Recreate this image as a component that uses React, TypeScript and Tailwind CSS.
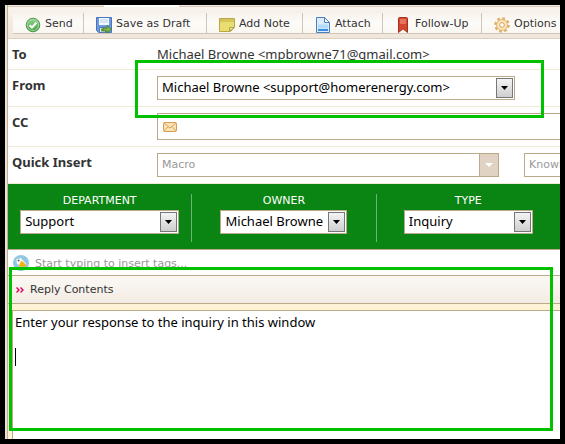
import type { ReactNode } from "react";

const SANS = "font-['Noto_Sans','Open_Sans',sans-serif]";
const WIDE = "font-['DejaVu_Sans',Verdana,sans-serif]";

function SendIcon() {
  return (
    <svg width="16" height="16" viewBox="0 0 16 16" aria-hidden="true">
      <defs>
        <linearGradient id="send" x1="0" y1="0" x2="0" y2="1">
          <stop offset="0" stopColor="#9bd39a" />
          <stop offset="1" stopColor="#3fa23c" />
        </linearGradient>
      </defs>
      <circle cx="8" cy="8" r="6.8" fill="url(#send)" stroke="#4c9a49" />
      <circle cx="8" cy="8" r="5.6" fill="none" stroke="#a9dca6" strokeWidth="0.8" />
      <path d="M4.6 8.2 7 10.5 11.4 5.8" fill="none" stroke="#fff" strokeWidth="2.2" />
    </svg>
  );
}

function SaveIcon() {
  return (
    <svg width="16" height="16" viewBox="0 0 16 16" aria-hidden="true">
      <path d="M0.5 0.5h15v15h-13l-2-2z" fill="#6b9ae0" stroke="#4a74bd" />
      <path d="M3 1h10v7H3z" fill="#f4f8fd" />
      <path d="M4 3h8M4 5h8" stroke="#b9cfe9" />
      <path d="M3.5 10.5h6v5h-6z" fill="#e3ecf8" stroke="#5479b5" />
      <path d="M5 11.5h2v3H5z" fill="#63a244" />
      <path d="M7 11h4V8.5l4.5 4-4.5 3.3V14H7z" fill="#7db44f" stroke="#47802a" strokeWidth="0.9" />
    </svg>
  );
}

function NoteIcon() {
  return (
    <svg width="16" height="16" viewBox="0 0 16 16" aria-hidden="true">
      <path d="M0.5 1.5h15v9l-4 4h-11z" fill="#e9dd72" stroke="#b9a647" />
      <path d="M1 2h14v3H1z" fill="#d3c559" />
      <path d="M15 10.5h-4.5V14z" fill="#8c7b2b" />
      <path d="M11 10.5h4L11 14z" fill="#faf3b4" stroke="#a8963e" strokeWidth="0.7" />
    </svg>
  );
}

function AttachIcon() {
  return (
    <svg width="16" height="16" viewBox="0 0 16 16" aria-hidden="true">
      <path d="M1.5 0.5h8l5 5v10h-13z" fill="#dcecfb" stroke="#4a7fc0" />
      <path d="M9.5 0.5v5h5z" fill="#fff" stroke="#4a7fc0" />
      <path d="M3 7.5h10v4H3z" fill="#b7daf8" />
      <path d="M3 12h10v2H3z" fill="#3a8edb" />
    </svg>
  );
}

function FlagIcon() {
  return (
    <svg width="16" height="16" viewBox="0 0 16 16" aria-hidden="true">
      <path d="M3.5 1.5q0-1 1-1h7q1 0 1 1v14L8 11.8l-4.5 3.7z" fill="#d6452d" stroke="#a3321f" />
      <path d="M5 2h6v5H5z" fill="#e6735b" />
    </svg>
  );
}

function GearIcon() {
  return (
    <svg width="16" height="16" viewBox="0 0 16 16" aria-hidden="true">
      <circle cx="8" cy="8" r="6.6" fill="none" stroke="#e0b067" strokeWidth="2.4" strokeDasharray="2.9 2.28" />
      <circle cx="8" cy="8" r="5.4" fill="#fbe6bd" stroke="#e0b067" strokeWidth="0.9" />
      <circle cx="8" cy="8" r="2.4" fill="#fdfaf4" stroke="#d9a456" />
    </svg>
  );
}

function MailIcon() {
  return (
    <svg width="14" height="10" viewBox="0 0 14 10" aria-hidden="true">
      <rect x="0.5" y="0.5" width="13" height="9" rx="1" fill="#fbe3b4" stroke="#d59a54" />
      <path d="m1 1 6 5 6-5M1 9l4-4.3M13 9 9 4.7" fill="none" stroke="#d59a54" strokeWidth="0.9" />
    </svg>
  );
}

function TagIcon() {
  return (
    <svg width="16" height="16" viewBox="0 0 16 16" aria-hidden="true">
      <circle cx="8" cy="8" r="8" fill="#8fc8e0" />
      <path d="M3.5 4 8 3.3l5.5 6-4.2 4.2-5.5-5.2z" fill="#fff" />
      <path d="m8.6 5.4 4.9 4.6-4 3.8-3.7-3.6z" fill="#f2b21c" />
      <circle cx="5.6" cy="5.6" r="1" fill="#4a5a68" />
    </svg>
  );
}

function ToolButton({ icon, label, className }: { icon: ReactNode; label: string; className: string }) {
  return (
    <button
      type="button"
      className={`flex h-full shrink-0 items-center gap-1 border-r border-[#cfc5b8] pl-3 last:border-r-0 ${className}`}
    >
      <span className="mt-1">{icon}</span>
      <span className="pt-0.5">{label}</span>
    </button>
  );
}

function Row({ id, label, className, children }: { id: string; label: string; className: string; children: ReactNode }) {
  return (
    <div className={`flex border-b border-[#f0ead6] ${className}`}>
      <label htmlFor={id} className="w-[149px] shrink-0 pl-1 pt-[5px] font-bold leading-5">
        {label}
      </label>
      {children}
    </div>
  );
}

function Picker({ id, value, className }: { id: string; value: string; className: string }) {
  return (
    <div className={`relative h-6 ${className}`}>
      <select id={id} className="h-full w-full appearance-none border border-[#bba98a] bg-white pl-1 pr-5 text-black outline-none">
        <option>{value}</option>
      </select>
      <span className="pointer-events-none absolute inset-y-0.5 right-0.5 flex w-[17px] items-center justify-center border border-[#777] bg-linear-to-b from-[#f4f4f4] to-[#cfcfcf]">
        <svg width="7" height="4" viewBox="0 0 7 4" aria-hidden="true">
          <path d="M0 0h7L3.5 4z" fill="#000" />
        </svg>
      </span>
    </div>
  );
}

function Field({ id, label, value, className }: { id: string; label: string; value: string; className: string }) {
  return (
    <div className="flex h-12 flex-1 flex-col items-center border-r border-[#6fb374] last:border-r-0">
      <label htmlFor={id} className={`h-4 text-[11px] leading-[14px] text-white ${WIDE}`}>
        {label}
      </label>
      <Picker id={id} value={value} className={className} />
    </div>
  );
}

export default function App() {
  return (
    <div className={`flex min-h-screen flex-col overflow-hidden border-[5px] border-black bg-white text-[13px] text-[#333] ${SANS}`}>
      <div className="flex flex-1 flex-col border-l-2 border-[#ece0d3]">
        <div className="flex flex-1 flex-col border-l border-[#c3b09b]">
          <div className="flex h-0.5 border-b border-[#d8cabb] bg-[#f3ece3]">
            <div className="ml-24 h-0.5 w-[75px] bg-white" />
          </div>
          <div className="border-b border-[#ddcfc2] bg-linear-to-b from-[#f8f3ec] to-[#efe6dc] pb-1 pl-[5px] pt-1.5">
            <div className={`flex h-[21px] border-b border-[#cfc5b8] bg-linear-to-b from-[#f8f4ee] via-[#fdfbf8] to-[#faf7f2] text-[11px] ${WIDE}`}>
              <ToolButton icon={<SendIcon />} label="Send" className="w-[71px]" />
              <ToolButton icon={<SaveIcon />} label="Save as Draft" className="w-[123px]" />
              <ToolButton icon={<NoteIcon />} label="Add Note" className="w-24" />
              <ToolButton icon={<AttachIcon />} label="Attach" className="w-20" />
              <ToolButton icon={<FlagIcon />} label="Follow-Up" className="w-[99px]" />
              <ToolButton icon={<GearIcon />} label="Options" className="w-20" />
            </div>
          </div>

          <div className="relative">
            <Row id="to" label="To" className="h-[31px]">
              <output id="to" className="pt-[5px] leading-5">
                Michael Browne &lt;mpbrowne71@gmail.com&gt;
              </output>
            </Row>
            <Row id="from" label="From" className="h-[37px]">
              <Picker id="from" value="Michael Browne <support@homerenergy.com>" className="mt-1.5 w-[358px]" />
            </Row>
            <Row id="cc" label="CC" className="h-10">
              <div className="mt-1.5 flex h-[27px] flex-1 items-center border border-r-0 border-[#bba98a] pl-[5px]">
                <MailIcon />
                <input id="cc" type="text" className="ml-1 min-w-0 flex-1 outline-none" />
              </div>
            </Row>
            <Row id="macro" label="Quick Insert" className="h-[37px]">
              <div className={`mt-1.5 flex h-6 min-w-0 flex-1 text-[11px] ${WIDE}`}>
                <div className="flex w-[342px] shrink-0 border border-[#bba98a]">
                  <input id="macro" type="text" placeholder="Macro" className="min-w-0 flex-1 pl-1 outline-none placeholder:text-[#999]" />
                  <button type="button" aria-label="Open macros" className="flex w-[19px] items-center justify-center border-l border-[#bba98a] bg-[#e0d3c3]">
                    <svg width="8" height="4" viewBox="0 0 8 4" aria-hidden="true">
                      <path d="M0 0h8L4 4z" fill="#fff" />
                    </svg>
                  </button>
                </div>
                <input
                  type="text"
                  aria-label="Knowledgebase"
                  placeholder="Knowledgebase"
                  className="ml-[25px] min-w-0 flex-1 border border-r-0 border-[#bba98a] pl-1 outline-none placeholder:text-[#999]"
                />
              </div>
            </Row>
            <div className="pointer-events-none absolute bottom-[66px] left-[127px] right-4 top-[21px] border-3 border-[#00c000]" />
          </div>

          <div className="flex h-[66px] border-b border-[#bba98a] bg-[#0a8412] pt-2.5">
            <Field id="department" label="DEPARTMENT" value="Support" className="w-[159px]" />
            <Field id="owner" label="OWNER" value="Michael Browne" className="w-[127px]" />
            <Field id="type" label="TYPE" value="Inquiry" className="w-[129px]" />
          </div>

          <div className="relative flex flex-1 flex-col">
            <div className="flex h-[26px] items-center gap-1.5 border-b border-[#bba98a] pl-[5px]">
              <TagIcon />
              <input
                type="text"
                aria-label="Tags"
                placeholder="Start typing to insert tags..."
                className={`min-w-0 flex-1 pt-1 text-[11px] outline-none placeholder:text-[#999] ${WIDE}`}
              />
            </div>
            <div className="flex h-7 items-center gap-1.5 border-b border-[#bba98a] bg-linear-to-b from-[#fbf8f4] to-[#f3ece4] pl-2">
              <svg width="8" height="6" viewBox="0 0 8 6" aria-hidden="true">
                <path d="m0.5 0.5 2.5 2.5-2.5 2.5M4.5 0.5 7 3 4.5 5.5" fill="none" stroke="#e0005a" strokeWidth="1.4" />
              </svg>
              <label htmlFor="reply" className={`pt-0.5 text-[11px] ${WIDE}`}>
                Reply Contents
              </label>
            </div>
            <div className="flex flex-1 flex-col bg-[#fff3d6] pl-1 pt-1.5">
              <div className="relative flex flex-1 border-l border-t border-[#bba98a] bg-white">
                <textarea
                  id="reply"
                  defaultValue="Enter your response to the inquiry in this window"
                  className="peer w-full resize-none pl-0.5 pt-[3px] leading-[17px] text-black outline-none"
                />
                <span className="pointer-events-none absolute left-0.5 top-[37px] h-[18px] w-px bg-black peer-focus:hidden" />
              </div>
            </div>
            <div className="pointer-events-none absolute bottom-2 left-px right-[7px] top-[17px] border-3 border-[#00c000]" />
          </div>
        </div>
      </div>
    </div>
  );
}
